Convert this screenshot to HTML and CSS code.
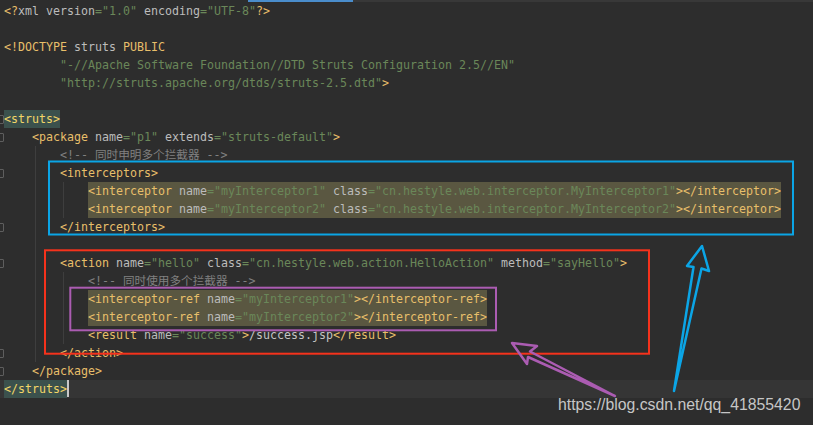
FILE: index.html
```html
<!DOCTYPE html>
<html lang="en">
<head>
  <meta charset="UTF-8">
  <title>struts.xml</title>
  <link rel="stylesheet" href="styles.css">
</head>
<body>
  <!-- tab strip -->
  <div class="tabs">
    <div class="tab-gap"></div>
    <div class="tab-active"></div>
    <div class="tab-rest"></div>
  </div>

  <!-- editor -->
  <div class="editor">
    <div class="guide g1"></div>
    <div class="guide g2"></div>
    <div class="guide g3"></div>

    <div class="line"><span class="t">&lt;?</span><span class="n">xml version</span><span class="v">="1.0"</span> <span class="n">encoding</span><span class="v">="UTF-8"</span><span class="t">?&gt;</span></div>
    <div class="line"></div>
    <div class="line"><span class="t">&lt;!DOCTYPE</span> <span class="n">struts</span> <span class="t">PUBLIC</span></div>
    <div class="line">        <span class="v">"-//Apache Software Foundation//DTD Struts Configuration 2.5//EN"</span></div>
    <div class="line">        <span class="v">"http://struts.apache.org/dtds/struts-2.5.dtd"</span><span class="t">&gt;</span></div>
    <div class="line"></div>
    <div class="line fold"><span class="match">&lt;struts&gt;</span></div>
    <div class="line fold">    <span class="t">&lt;package</span> <span class="n">name</span><span class="v">="p1"</span> <span class="n">extends</span><span class="v">="struts-default"</span><span class="t">&gt;</span></div>
    <div class="line">        <span class="c">&lt;!-- 同时申明多个拦截器 --&gt;</span></div>
    <div class="line fold">        <span class="t">&lt;interceptors&gt;</span></div>
    <div class="line">            <span class="hl"><span class="t">&lt;interceptor</span> <span class="n">name</span><span class="v">="myInterceptor1"</span> <span class="n">class</span><span class="v">="cn.hestyle.web.interceptor.MyInterceptor1"</span><span class="t">&gt;&lt;/interceptor&gt;</span></span></div>
    <div class="line">            <span class="hl"><span class="t">&lt;interceptor</span> <span class="n">name</span><span class="v">="myInterceptor2"</span> <span class="n">class</span><span class="v">="cn.hestyle.web.interceptor.MyInterceptor2"</span><span class="t">&gt;&lt;/interceptor&gt;</span></span></div>
    <div class="line fold">        <span class="t">&lt;/interceptors&gt;</span></div>
    <div class="line"></div>
    <div class="line fold">        <span class="t">&lt;action</span> <span class="n">name</span><span class="v">="hello"</span> <span class="n">class</span><span class="v">="cn.hestyle.web.action.HelloAction"</span> <span class="n">method</span><span class="v">="sayHello"</span><span class="t">&gt;</span></div>
    <div class="line">            <span class="c">&lt;!-- 同时使用多个拦截器 --&gt;</span></div>
    <div class="line">            <span class="hl"><span class="t">&lt;interceptor-ref</span> <span class="n">name</span><span class="v">="myInterceptor1"</span><span class="t">&gt;&lt;/interceptor-ref&gt;</span></span></div>
    <div class="line">            <span class="hl"><span class="t">&lt;interceptor-ref</span> <span class="n">name</span><span class="v">="myInterceptor2"</span><span class="t">&gt;&lt;/interceptor-ref&gt;</span></span></div>
    <div class="line">            <span class="t">&lt;result</span> <span class="n">name</span><span class="v">="success"</span><span class="t">&gt;</span><span class="x">/success.jsp</span><span class="t">&lt;/result&gt;</span></div>
    <div class="line fold">        <span class="t">&lt;/action&gt;</span></div>
    <div class="line fold">    <span class="t">&lt;/package&gt;</span></div>
    <div class="line current"><span class="match">&lt;/struts&gt;</span><span class="caret"></span></div>
  </div>

  <!-- annotations drawn over the screenshot -->
  <svg class="marks" width="813" height="425" viewBox="0 0 813 425">
    <rect x="49" y="161.5" width="744" height="73" fill="none" stroke="#0ba5e6" stroke-width="2"/>
    <rect x="45" y="250.3" width="604" height="103.4" fill="none" stroke="#f5321c" stroke-width="2"/>
    <rect x="70.3" y="287.7" width="425.7" height="42.6" fill="none" stroke="#ab5cb2" stroke-width="2"/>
    <polygon points="512,343 537,346 530,351.5 615,396 528,357 527,364" fill="none" stroke="#ab5cb2" stroke-width="2.5" stroke-linejoin="round"/>
    <polygon points="702,246 709,271 701.5,268.5 674,391 693.5,267 687,266" fill="none" stroke="#0ba5e6" stroke-width="2.5" stroke-linejoin="round"/>
  </svg>

  <div class="watermark">https://blog.csdn.net/qq_41855420</div>
</body>
</html>
```

FILE: styles.css
```css
body {
  margin: 0;
  padding: 0;
  width: 813px;
  height: 425px;
  overflow: hidden;
  background-color: #2d2d2d;
  position: relative;
}

:root {
  --tag-color: #e8bf6a;
  --name-color: #bcbcbc;
  --value-color: #6a8759;
  --comment-color: #808080;
}

/* tab strip */
.tabs {
  display: flex;
  height: 2px;
}

.tab-gap {
  width: 248px;
}

.tab-active {
  width: 105px;
  background-color: #4a8dcc;
}

.tab-rest {
  flex: 1;
  background-color: #383838;
}

/* editor */
.editor {
  position: relative;
  font-family: "DejaVu Sans Mono", "Noto Sans CJK SC", monospace;
  font-size: 11.63px;
  color: var(--name-color);
}

.line {
  position: relative;
  height: 18px;
  line-height: 18px;
  padding-left: 4px;
  white-space: pre;
}

.line.fold::before {
  content: "";
  position: absolute;
  left: -4px;
  top: 5px;
  width: 6px;
  height: 7px;
  border: 1px solid #5e5e5e;
  border-radius: 1px;
}

.line.current {
  background-color: #353535;
}

.guide {
  position: absolute;
  width: 1px;
  background-color: #3e3e3e;
}

.g1 {
  left: 35px;
  top: 144px;
  height: 216px;
}

.g2 {
  left: 63px;
  top: 180px;
  height: 36px;
}

.g3 {
  left: 63px;
  top: 270px;
  height: 72px;
}

.t {
  color: var(--tag-color);
}

.n {
  color: var(--name-color);
}

.v {
  color: var(--value-color);
}

.c {
  color: var(--comment-color);
}

.x {
  color: #c4c4c4;
}

.hl {
  display: inline-block;
  height: 18px;
  background-color: #5a5741;
}

.match {
  display: inline-block;
  height: 18px;
  background-color: #3b514d;
  color: #f2d668;
}

.caret {
  display: inline-block;
  width: 2px;
  height: 17px;
  vertical-align: top;
  background-color: #c8c8c8;
}

/* overlays */
.marks {
  position: absolute;
  left: 0;
  top: 0;
}

.watermark {
  position: absolute;
  left: 558px;
  top: 396px;
  font-family: "Liberation Sans", Arial, sans-serif;
  font-size: 15.8px;
  color: #c6c6c6;
}
```
